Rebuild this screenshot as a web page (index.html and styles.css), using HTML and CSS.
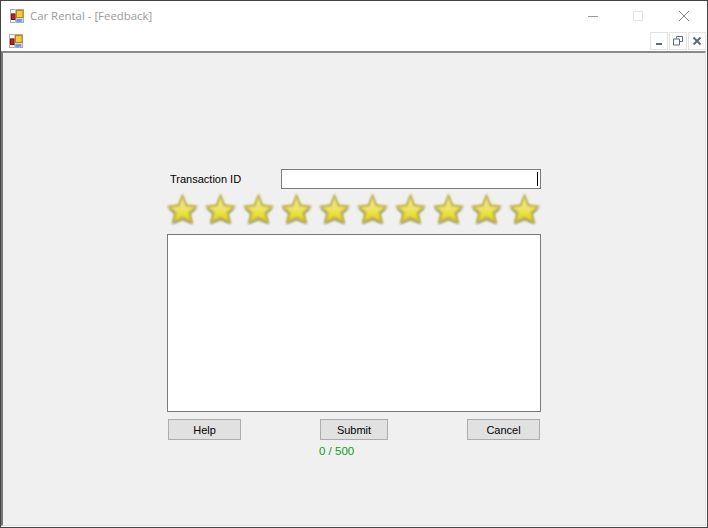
FILE: index.html
```html
<!DOCTYPE html>
<html>
  <head>
    <title>Car Rental - [Feedback]</title>
    <link rel="stylesheet" href="styles.css">
  </head>
  <body>
    <svg class="defs" width="0" height="0">
      <defs>
        <linearGradient id="star-fill" x1="0" y1="0" x2="0" y2="1">
          <stop offset="0" stop-color="#f0eb98"/>
          <stop offset="0.5" stop-color="#ede562"/>
          <stop offset="1" stop-color="#e4d612"/>
        </linearGradient>
        <filter id="soft" x="-20%" y="-20%" width="140%" height="140%">
          <feGaussianBlur stdDeviation="0.9"/>
        </filter>
        <filter id="shade" x="-20%" y="-20%" width="140%" height="140%">
          <feGaussianBlur stdDeviation="1.1"/>
        </filter>
        <symbol id="star" viewBox="0 0 34 34">
          <path d="M16.500 5 20.500 15 31 16.500 24 23 26.500 32.500 16.500 28.500 6.500 32.500 9 23 2 16.500 12.500 15Z" fill="#555" opacity="0.5" filter="url(#shade)"/>
          <path d="M16.500 2 20.500 12.700 31.500 14.200 24 21 26.800 31.300 16.500 26.500 6.200 31.300 9 21 1.500 14.200 12.500 12.700Z" fill="#bdb244" stroke="#bdb244" stroke-width="1" stroke-linejoin="round" filter="url(#soft)"/>
          <path d="M16.500 5.500 19.500 14.200 28 15.300 22.300 20.400 24.300 28.500 16.500 24.500 8.700 28.500 10.700 20.400 5 15.300 13.500 14.200Z" fill="url(#star-fill)" filter="url(#soft)"/>
        </symbol>
        <symbol id="app-icon" viewBox="0 0 14 14">
          <rect x="0.500" y="0.500" width="13" height="13" fill="#fff" stroke="#aaa"/>
          <path d="M0 4.500H5M5.500 0V14M0 10.500H14M10.500 10V14" stroke="#c4c4c4" fill="none"/>
          <rect x="6.500" y="1.500" width="6.500" height="7" fill="#f6c93a" stroke="#b8860b"/>
          <rect x="1.500" y="5" width="3.500" height="5.500" fill="#c8201c" stroke="#7c1512"/>
          <rect x="6.500" y="10" width="5.500" height="3" fill="#5f96e6" stroke="#8ab0e8"/>
        </symbol>
      </defs>
    </svg>

    <div class="window">
      <div class="titlebar">
        <svg class="app-icon"><use href="#app-icon"/></svg>
        <span class="title">Car Rental - [Feedback]</span>
        <div class="caption-buttons">
          <svg width="12" height="12" viewBox="0 0 12 12"><path d="M2 6.500H12" stroke="#999"/></svg>
          <svg width="12" height="12" viewBox="0 0 12 12"><rect x="1.500" y="1.500" width="9" height="9" fill="none" stroke="#e3e3e3"/></svg>
          <svg width="12" height="12" viewBox="0 0 12 12"><path d="M1 1 11 11M11 1 1 11" stroke="#888"/></svg>
        </div>
      </div>

      <div class="menustrip">
        <svg class="app-icon"><use href="#app-icon"/></svg>
        <div class="mdi-buttons">
          <div class="mdi-button"><svg width="12" height="12" viewBox="0 0 12 12"><path d="M3 9H9" stroke="#5c6b7c" stroke-width="2"/></svg></div>
          <div class="mdi-button"><svg width="12" height="12" viewBox="0 0 12 12"><path d="M4.500 3.500V1.500H10.500V6.500H8M1.500 4H7.500V10H1.500Z" fill="none" stroke="#5c6b7c"/></svg></div>
          <div class="mdi-button"><svg width="12" height="12" viewBox="0 0 12 12"><path d="M2.500 2.500 9.500 9.500M9.500 2.500 2.500 9.500" stroke="#5c6b7c" stroke-width="2"/></svg></div>
        </div>
      </div>

      <div class="client">
        <div class="feedback-form">
          <div class="id-row">
            <label class="id-label">Transaction ID</label>
            <div class="id-input"><span class="caret"></span></div>
          </div>
          <div class="stars">
            <svg class="star"><use href="#star"/></svg>
            <svg class="star"><use href="#star"/></svg>
            <svg class="star"><use href="#star"/></svg>
            <svg class="star"><use href="#star"/></svg>
            <svg class="star"><use href="#star"/></svg>
            <svg class="star"><use href="#star"/></svg>
            <svg class="star"><use href="#star"/></svg>
            <svg class="star"><use href="#star"/></svg>
            <svg class="star"><use href="#star"/></svg>
            <svg class="star"><use href="#star"/></svg>
          </div>
          <div class="comment"></div>
          <div class="buttons">
            <button class="btn btn-help">Help</button>
            <div class="submit-col">
              <button class="btn btn-submit">Submit</button>
              <div class="counter">0 / 500</div>
            </div>
            <button class="btn btn-cancel">Cancel</button>
          </div>
        </div>
      </div>
    </div>
  </body>
</html>
```

FILE: styles.css
```css
html, body {
  margin: 0;
  padding: 0;
}
body {
  width: 708px;
  height: 528px;
  overflow: hidden;
  background: #fff;
  font-family: "Liberation Sans", Arial, sans-serif;
  font-size: 11px;
  color: #000;
}
.defs {
  position: absolute;
}
.window {
  box-sizing: border-box;
  width: 708px;
  height: 528px;
  border: 1px solid #444;
  background: #fff;
  display: flex;
  flex-direction: column;
}
.titlebar {
  height: 29px;
  display: flex;
  align-items: center;
  padding-left: 9px;
}
.app-icon {
  width: 14px;
  height: 14px;
  flex: none;
}
.title {
  margin-left: 6px;
  font-family: "Open Sans", sans-serif;
  font-size: 11.400px;
  color: #9a9a9a;
}
.caption-buttons {
  margin-left: auto;
  display: flex;
  gap: 34px;
  padding-right: 17px;
}
.menustrip {
  height: 21px;
  display: flex;
  align-items: center;
  padding-left: 8px;
}
.mdi-buttons {
  margin-left: auto;
  display: flex;
  gap: 1px;
  padding-right: 1px;
}
.mdi-button {
  box-sizing: border-box;
  width: 18px;
  height: 18px;
  border: 1px solid #e2e2e2;
  display: flex;
  align-items: center;
  justify-content: center;
}
.client {
  flex: 1;
  box-sizing: border-box;
  margin: 0 1px 1px 0;
  background: #f0f0f0;
  border-top: 2px solid #8a8a8a;
  border-left: 2px solid #777;
  border-right: 1px solid #e2e2e2;
  border-bottom: 1px solid #e2e2e2;
  padding: 116px 0 0 164px;
}
.feedback-form {
  width: 374px;
}
.id-row {
  height: 20px;
  display: flex;
  align-items: center;
}
.id-label {
  box-sizing: border-box;
  width: 114px;
  padding-left: 3px;
}
.id-input {
  box-sizing: border-box;
  flex: 1;
  height: 20px;
  background: #fff;
  border: 1px solid #7a7a7a;
  display: flex;
  justify-content: flex-end;
  align-items: center;
  padding-right: 2px;
}
.caret {
  width: 1px;
  height: 14px;
  background: #000;
}
.stars {
  display: flex;
  gap: 4px;
  margin: 3px 0 0 -1px;
  height: 34px;
}
.star {
  width: 34px;
  height: 34px;
  flex: none;
}
.comment {
  box-sizing: border-box;
  height: 178px;
  margin-top: 8px;
  background: #fff;
  border: 1px solid #7a7a7a;
}
.buttons {
  display: flex;
  justify-content: space-between;
  align-items: flex-start;
  margin-top: 7px;
  padding: 0 1px;
}
.btn {
  box-sizing: border-box;
  height: 21px;
  padding: 0;
  background: #e1e1e1;
  border: 1px solid #adadad;
  font-family: inherit;
  font-size: 11px;
  color: #000;
}
.btn-help,
.btn-cancel {
  width: 73px;
}
.btn-submit {
  width: 68px;
}
.counter {
  margin-top: 5px;
  margin-left: -1px;
  font-size: 11.500px;
  color: #109a20;
}
```
